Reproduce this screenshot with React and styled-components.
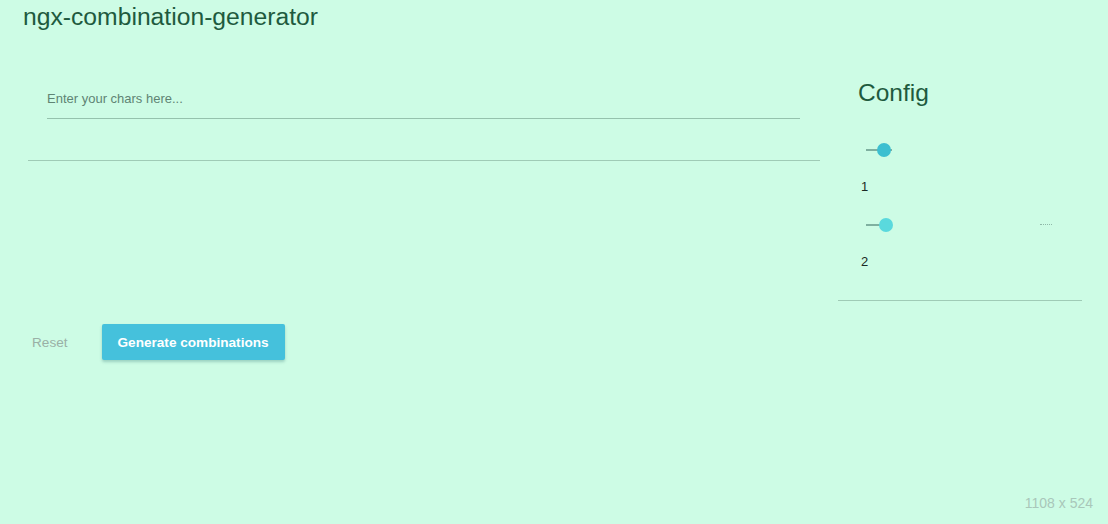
import React from 'react';
import styled, { createGlobalStyle } from 'styled-components';

const GlobalStyle = createGlobalStyle`
  html, body {
    margin: 0;
    padding: 0;
    background: #cdfce5;
  }
  body {
    font-family: "Liberation Sans", Arial, sans-serif;
  }
`;

const Page = styled.div`
  position: relative;
  width: 1108px;
  height: 524px;
  background: #cdfce5;
  overflow: hidden;
`;

const Title = styled.h1`
  margin: 0;
  padding: 4px 0 0 23px;
  font-size: 24.7px;
  line-height: 26px;
  font-weight: 400;
  color: #1e5a3e;
`;

const Layout = styled.div`
  display: flex;
  gap: 18px;
  padding: 0 26px 0 28px;
`;

const LeftColumn = styled.div`
  width: 792px;
  display: flex;
  flex-direction: column;
`;

const InputCard = styled.div`
  padding: 59px 20px 0 19px;
  height: 71px;
  border-bottom: 1px solid #9fcbb6;
`;

const CharsInput = styled.input`
  width: 100%;
  box-sizing: border-box;
  border: none;
  border-bottom: 1px solid #95c2ad;
  background: transparent;
  padding: 0 0 12px 0;
  font-family: "Liberation Sans", Arial, sans-serif;
  font-size: 13px;
  color: #2f5c48;
  outline: none;

  &::placeholder {
    color: #5f8474;
  }
`;

const Actions = styled.div`
  display: flex;
  align-items: center;
  gap: 34px;
  margin-top: 163px;
  padding-left: 4px;
`;

const TextButton = styled.button`
  border: none;
  background: none;
  padding: 0;
  font-family: "Liberation Sans", Arial, sans-serif;
  font-size: 13.6px;
  color: #9ab0a6;
  cursor: pointer;
`;

const PrimaryButton = styled.button`
  height: 36px;
  padding: 0 16px;
  border: none;
  border-radius: 2px;
  background: #45c1dc;
  color: #ffffff;
  font-family: "Liberation Sans", Arial, sans-serif;
  font-size: 13.6px;
  font-weight: 700;
  box-shadow: 0 2px 3px rgba(40, 110, 110, 0.3);
  cursor: pointer;
`;

const ConfigPanel = styled.div`
  width: 244px;
  display: flex;
  flex-direction: column;
  padding: 48px 0 31px;
  border-bottom: 1px solid #9fcbb6;
  align-self: flex-start;
`;

const ConfigTitle = styled.h2`
  margin: 0 0 0 20px;
  font-size: 24.5px;
  line-height: 30px;
  font-weight: 400;
  color: #1e5a3e;
`;

const SliderBlock = styled.div`
  display: flex;
  flex-direction: column;
  padding-left: 23px;
  margin-top: ${p => p.$top}px;
`;

const SliderTrack = styled.div`
  position: relative;
  width: 198px;
  height: 16px;
`;

const TrackFill = styled.div`
  position: absolute;
  left: 5px;
  top: 7px;
  width: 26px;
  height: 2px;
  background: #7fb0a0;
`;

const Thumb = styled.div`
  position: absolute;
  top: 1px;
  left: ${p => p.$left}px;
  width: 14px;
  height: 14px;
  border-radius: 50%;
  background: ${p => p.$color};
`;

const Ticks = styled.div`
  position: absolute;
  right: 7px;
  top: 7px;
  width: 12px;
  border-top: 1px dotted #8fb8a8;
`;

const SliderValue = styled.span`
  margin-top: 21px;
  font-size: 13px;
  line-height: 15px;
  color: #1b2a24;
`;

const SizeNote = styled.span`
  position: absolute;
  right: 15px;
  bottom: 13px;
  font-size: 14px;
  color: #a9c7ba;
`;

const Slider = ({ value, left, color, top, ticks }) => (
  <SliderBlock $top={top}>
    <SliderTrack>
      <TrackFill />
      <Thumb $left={left} $color={color} />
      {ticks && <Ticks />}
    </SliderTrack>
    <SliderValue>{value}</SliderValue>
  </SliderBlock>
);

const App = () => (
  <Page>
    <GlobalStyle />
    <Title>ngx-combination-generator</Title>
    <Layout>
      <LeftColumn>
        <InputCard>
          <CharsInput placeholder="Enter your chars here..." />
        </InputCard>
        <Actions>
          <TextButton>Reset</TextButton>
          <PrimaryButton>Generate combinations</PrimaryButton>
        </Actions>
      </LeftColumn>
      <ConfigPanel>
        <ConfigTitle>Config</ConfigTitle>
        <Slider value="1" left={16} color="#3cbfd0" top={34} />
        <Slider value="2" left={18} color="#5ad9dd" top={23} ticks />
      </ConfigPanel>
    </Layout>
    <SizeNote>1108 x 524</SizeNote>
  </Page>
);

export default App;
